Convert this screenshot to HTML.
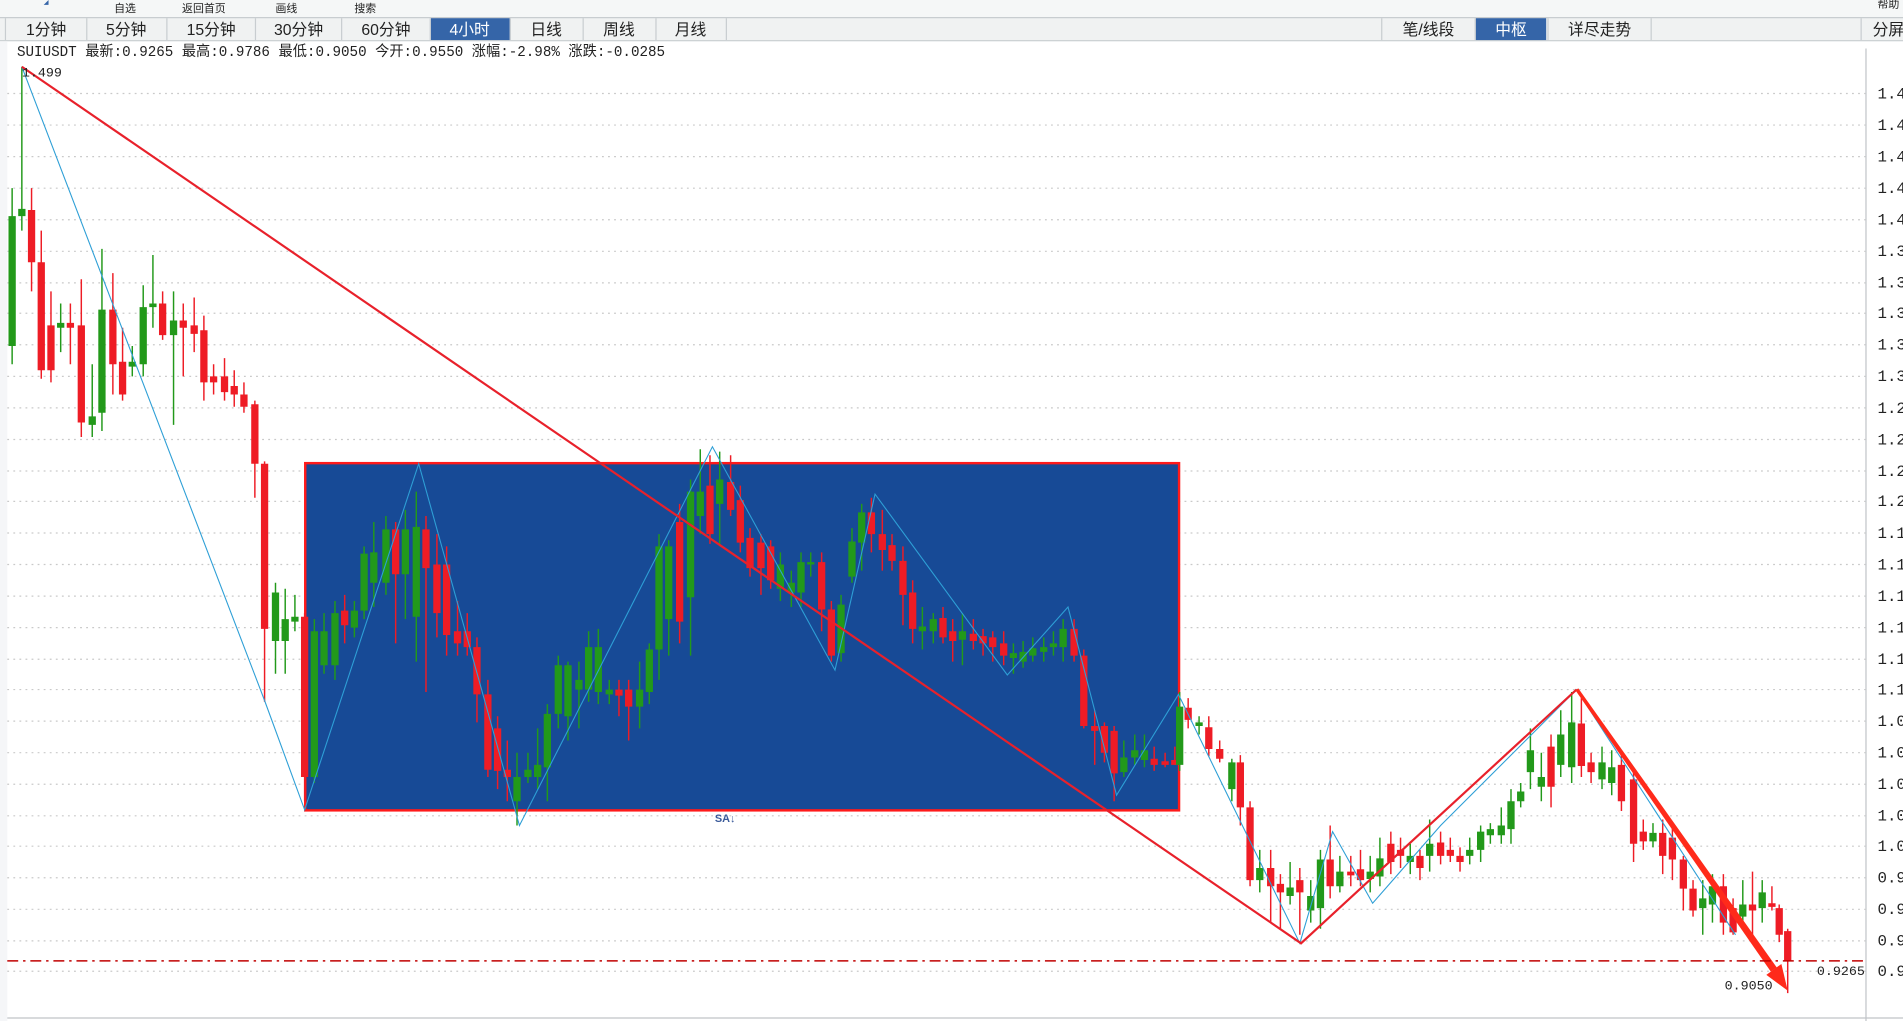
<!DOCTYPE html>
<html><head><meta charset="utf-8"><style>
html,body{margin:0;padding:0;background:#fff;overflow:hidden}
svg{display:block}
text{font-family:"Liberation Sans","Noto Sans CJK SC",sans-serif}
.m{font-family:"Liberation Mono","Noto Sans CJK SC",monospace}
</style></head><body>
<svg width="1903" height="1021" viewBox="0 0 1568 841" preserveAspectRatio="none" xmlns="http://www.w3.org/2000/svg">
<rect width="1568" height="841" fill="#fff"/>
<rect x="0" y="0" width="1568" height="14" fill="#f5f7f7"/>
<path d="M40 0l-4 4 4 0z" fill="#3565a8"/>
<g font-size="9" fill="#222">
<text x="94" y="10">自选</text><text x="150" y="10">返回首页</text><text x="227" y="10">画线</text><text x="292" y="10">搜索</text><text x="1547" y="6">帮助</text>
</g>
<rect x="0" y="14" width="1568" height="20" fill="#f0f2f2"/>
<line x1="0" y1="14.5" x2="1568" y2="14.5" stroke="#c8cdd0"/>
<line x1="0" y1="33.5" x2="1568" y2="33.5" stroke="#c8cdd0"/>
<rect x="355" y="15" width="65" height="18" fill="#3565a8"/>
<rect x="1216" y="15" width="58" height="18" fill="#3565a8"/>
<g stroke="#c8cdd0">
<line x1="4.5" y1="15" x2="4.5" y2="33"/><line x1="71.5" y1="15" x2="71.5" y2="33"/><line x1="137.5" y1="15" x2="137.5" y2="33"/><line x1="210.5" y1="15" x2="210.5" y2="33"/><line x1="281.5" y1="15" x2="281.5" y2="33"/><line x1="354.5" y1="15" x2="354.5" y2="33"/><line x1="420.5" y1="15" x2="420.5" y2="33"/><line x1="480.5" y1="15" x2="480.5" y2="33"/><line x1="540.5" y1="15" x2="540.5" y2="33"/><line x1="598.5" y1="15" x2="598.5" y2="33"/>
<line x1="1138.5" y1="15" x2="1138.5" y2="33"/><line x1="1215.5" y1="15" x2="1215.5" y2="33"/><line x1="1275.5" y1="15" x2="1275.5" y2="33"/><line x1="1360.5" y1="15" x2="1360.5" y2="33"/><line x1="1533.5" y1="15" x2="1533.5" y2="33"/>
</g>
<g font-size="13" fill="#222" text-anchor="middle">
<text x="38" y="29">1分钟</text><text x="104" y="29">5分钟</text><text x="174" y="29">15分钟</text><text x="246" y="29">30分钟</text><text x="318" y="29">60分钟</text><text x="387" y="29" fill="#fff">4小时</text><text x="450" y="29">日线</text><text x="510" y="29">周线</text><text x="569" y="29">月线</text>
<text x="1177" y="29">笔/线段</text><text x="1245" y="29" fill="#fff">中枢</text><text x="1318" y="29">详尽走势</text><text x="1556" y="29">分屏</text>
</g>
<text class="m" x="14" y="46" font-size="12" fill="#222" textLength="534" lengthAdjust="spacingAndGlyphs">SUIUSDT  最新:0.9265 最高:0.9786 最低:0.9050 今开:0.9550 涨幅:-2.98% 涨跌:-0.0285</text>
<rect x="0" y="34" width="6" height="807" fill="#f5f6f8"/>
<g stroke="#c9c9c9" stroke-dasharray="1.5 3.5">
<path d="M6 77H1537M6 103H1537M6 129H1537M6 155H1537M6 181H1537M6 207H1537M6 233H1537M6 258H1537M6 284H1537M6 310H1537M6 336H1537M6 362H1537M6 388H1537M6 413H1537M6 439H1537M6 465H1537M6 491H1537M6 517H1537M6 543H1537M6 568H1537M6 594H1537M6 620H1537M6 646H1537M6 672H1537M6 697H1537M6 723H1537M6 749H1537M6 775H1537M6 800H1537"/>
</g>
<line x1="1537.5" y1="40" x2="1537.5" y2="841" stroke="#c0c4c8"/>
<line x1="6" y1="838.5" x2="1568" y2="838.5" stroke="#c0c4c8"/>
<g font-size="13" fill="#222">
<text class="m" x="1547" y="81">1.4</text><text class="m" x="1547" y="107">1.4</text><text class="m" x="1547" y="133">1.4</text><text class="m" x="1547" y="159">1.4</text><text class="m" x="1547" y="185">1.4</text>
<text class="m" x="1547" y="211">1.3</text><text class="m" x="1547" y="237">1.3</text><text class="m" x="1547" y="262">1.3</text><text class="m" x="1547" y="288">1.3</text><text class="m" x="1547" y="314">1.3</text>
<text class="m" x="1547" y="340">1.2</text><text class="m" x="1547" y="366">1.2</text><text class="m" x="1547" y="392">1.2</text><text class="m" x="1547" y="417">1.2</text><text class="m" x="1547" y="443">1.1</text>
<text class="m" x="1547" y="469">1.1</text><text class="m" x="1547" y="495">1.1</text><text class="m" x="1547" y="521">1.1</text><text class="m" x="1547" y="547">1.1</text><text class="m" x="1547" y="572">1.1</text>
<text class="m" x="1547" y="598">1.0</text><text class="m" x="1547" y="624">1.0</text><text class="m" x="1547" y="650">1.0</text><text class="m" x="1547" y="676">1.0</text><text class="m" x="1547" y="701">1.0</text>
<text class="m" x="1547" y="727">0.9</text><text class="m" x="1547" y="753">0.9</text><text class="m" x="1547" y="779">0.9</text><text class="m" x="1547" y="804">0.9</text>
</g>
<rect x="251.5" y="381.5" width="720" height="286" fill="#174a96" stroke="#ff1a1a" stroke-width="2"/>
<text x="589" y="677" font-size="9" font-weight="bold" fill="#3a5a9a">SA↓</text>
<path fill="none" stroke="#ee1c25" stroke-width="1.2" d="M26 155V240M34 190V312M42 240V315M58 250V300M67 230V360M93 225V325M101 270V330M134 240V280M151 250V310M160 245V290M168 260V330M176 300V325M185 295V330M193 305V335M201 315V340M210 330V410M218 380V578M251 505V660M284 490V530M326 430V530M351 425V570M360 440V525M368 450V540M377 495V540M385 505V540M393 525V595M402 560V640M410 590V650M418 610V660M510 560V590M518 560V610M560 415V530M585 375V448M602 375V425M610 400V455M618 435V475M627 440V490M635 445V485M677 455V520M685 495V545M718 410V455M727 420V470M735 440V470M744 450V515M752 478V530M777 500V530M785 510V545M802 510V535M810 518V540M818 520V545M827 520V548M885 510V545M893 535V600M902 585V630M910 595V628M918 598V660M951 615V635M960 620V632M968 615V630M979 575V600M996 590V623M1005 610V628M1022 622V680M1030 660V730M1047 700V760M1055 720V765M1071 715V770M1096 680V740M1113 705V730M1121 700V730M1146 685V720M1154 690V715M1170 700V725M1187 685V712M1195 690V710M1203 698V718M1278 605V665M1303 575V640M1311 620V645M1336 622V668M1346 635V710M1354 675V700M1370 675V720M1378 680V725M1387 705V750M1395 725V755M1420 720V770M1428 740V770M1444 718V770M1460 730V750M1466 745V776M1473 765V818"/>
<path fill="#ee1c25" d="M23 173h6V216h-6zM31 216h6V305h-6zM39 268h6V305h-6zM55 266h6V270h-6zM64 268h6V348h-6zM90 255h6V300h-6zM98 298h6V325h-6zM131 250h6V276h-6zM148 264h6V270h-6zM157 268h6V275h-6zM165 272h6V315h-6zM173 310h6V315h-6zM182 310h6V323h-6zM190 318h6V325h-6zM198 325h6V335h-6zM207 333h6V382h-6zM215 382h6V518h-6zM248 508h6V640h-6zM281 503h6V515h-6zM323 436h6V473h-6zM348 436h6V468h-6zM357 465h6V505h-6zM365 465h6V523h-6zM374 520h6V530h-6zM382 520h6V533h-6zM390 533h6V572h-6zM399 572h6V634h-6zM407 600h6V635h-6zM415 634h6V640h-6zM507 568h6V573h-6zM515 568h6V582h-6zM557 430h6V512h-6zM582 400h6V440h-6zM599 397h6V420h-6zM607 412h6V447h-6zM615 443h6V468h-6zM624 447h6V468h-6zM632 450h6V478h-6zM674 463h6V502h-6zM682 502h6V540h-6zM715 422h6V440h-6zM724 440h6V453h-6zM732 449h6V462h-6zM741 462h6V490h-6zM749 488h6V518h-6zM774 509h6V525h-6zM782 520h6V528h-6zM799 522h6V528h-6zM807 524h6V530h-6zM815 525h6V533h-6zM824 530h6V540h-6zM882 518h6V540h-6zM890 540h6V598h-6zM899 598h6V602h-6zM907 598h6V620h-6zM915 602h6V637h-6zM948 625h6V630h-6zM957 627h6V630h-6zM965 626h6V630h-6zM976 583h6V593h-6zM993 599h6V617h-6zM1002 617h6V625h-6zM1019 628h6V665h-6zM1027 665h6V725h-6zM1044 715h6V730h-6zM1052 728h6V735h-6zM1068 725h6V735h-6zM1093 708h6V730h-6zM1110 718h6V721h-6zM1118 716h6V725h-6zM1143 695h6V710h-6zM1151 700h6V705h-6zM1167 705h6V715h-6zM1184 694h6V705h-6zM1192 700h6V705h-6zM1200 705h6V710h-6zM1275 615h6V648h-6zM1300 596h6V631h-6zM1308 628h6V636h-6zM1333 630h6V660h-6zM1343 642h6V695h-6zM1351 685h6V693h-6zM1367 686h6V705h-6zM1375 690h6V708h-6zM1384 708h6V732h-6zM1392 732h6V750h-6zM1417 730h6V760h-6zM1425 748h6V768h-6zM1441 745h6V750h-6zM1457 744h6V747h-6zM1463 748h6V770h-6zM1470 767h6V792h-6z"/>
<path fill="none" stroke="#22991a" stroke-width="1.2" d="M10 155V300M18 55V190M50 250V290M76 300V360M84 205V355M109 285V310M118 235V310M126 210V270M143 240V350M227 480V555M235 485V555M243 490V520M259 510V645M267 505V555M276 495V560M292 495V525M300 450V510M308 430V500M318 425V490M334 420V510M343 405V545M426 620V680M435 620V645M443 600V650M451 580V660M460 540V600M468 545V610M477 545V600M485 520V578M493 518V580M502 560V580M527 545V600M535 530V580M543 440V560M551 445V540M569 395V540M577 370V440M593 372V450M643 455V495M652 470V500M660 455V500M668 455V475M693 490V545M702 435V480M710 415V470M760 500V535M769 505V530M793 505V548M835 530V555M843 528V550M851 525V545M860 525V545M868 520V540M876 510V545M926 610V640M935 605V630M943 605V632M972 570V635M988 590V605M1015 625V660M1038 700V735M1063 710V745M1080 725V760M1088 700V765M1104 705V735M1129 705V735M1137 690V730M1162 695V720M1178 675V718M1211 690V712M1220 680V710M1228 678V695M1237 665V695M1245 650V695M1253 645V665M1261 600V650M1270 620V660M1286 585V640M1295 570V645M1320 615V650M1328 618V655M1362 678V698M1403 725V770M1411 720V760M1436 725V765M1452 725V760"/>
<path fill="#22991a" d="M7 178h6V285h-6zM15 172h6V178h-6zM47 266h6V270h-6zM73 343h6V350h-6zM81 255h6V340h-6zM106 298h6V302h-6zM115 253h6V300h-6zM123 250h6V253h-6zM140 264h6V276h-6zM224 488h6V528h-6zM232 510h6V528h-6zM240 508h6V512h-6zM256 520h6V640h-6zM264 520h6V548h-6zM273 505h6V548h-6zM289 503h6V517h-6zM297 456h6V503h-6zM305 455h6V480h-6zM315 436h6V480h-6zM331 436h6V473h-6zM340 434h6V508h-6zM423 640h6V660h-6zM432 634h6V640h-6zM440 630h6V640h-6zM448 588h6V632h-6zM457 548h6V588h-6zM465 548h6V590h-6zM474 560h6V568h-6zM482 533h6V568h-6zM490 533h6V570h-6zM499 568h6V572h-6zM524 568h6V582h-6zM532 535h6V570h-6zM540 450h6V535h-6zM548 450h6V510h-6zM566 405h6V492h-6zM574 405h6V425h-6zM590 395h6V415h-6zM640 465h6V485h-6zM649 480h6V488h-6zM657 463h6V488h-6zM665 463h6V465h-6zM690 498h6V538h-6zM699 446h6V475h-6zM707 422h6V447h-6zM757 516h6V520h-6zM766 510h6V520h-6zM790 520h6V527h-6zM832 538h6V542h-6zM840 537h6V545h-6zM848 534h6V540h-6zM857 533h6V537h-6zM865 530h6V533h-6zM873 518h6V533h-6zM923 624h6V636h-6zM932 618h6V624h-6zM940 618h6V626h-6zM969 582h6V630h-6zM985 595h6V598h-6zM1012 628h6V650h-6zM1035 715h6V725h-6zM1060 731h6V738h-6zM1077 738h6V750h-6zM1085 708h6V748h-6zM1101 718h6V730h-6zM1126 718h6V724h-6zM1134 707h6V722h-6zM1159 705h6V710h-6zM1175 695h6V705h-6zM1208 700h6V705h-6zM1217 685h6V700h-6zM1225 683h6V688h-6zM1234 680h6V688h-6zM1242 660h6V683h-6zM1250 652h6V660h-6zM1258 618h6V636h-6zM1267 640h6V648h-6zM1283 605h6V630h-6zM1292 595h6V632h-6zM1317 628h6V642h-6zM1325 632h6V645h-6zM1359 686h6V693h-6zM1400 740h6V748h-6zM1408 730h6V745h-6zM1433 745h6V755h-6zM1449 735h6V748h-6z"/>
<polyline fill="none" stroke="#2e9fd6" stroke-width="0.9" points="18,55 218,577 251,667 345,382 428,680 587,368 688,552 721,407 830,556 880,500 920,655 971,572 1071,777 1098,685 1131,744 1187,680 1299,568 1430,770"/>
<polyline fill="none" stroke="#e8212b" stroke-width="1.8" points="18,55 1072,777 1299,568"/>
<polygon fill="#ff2a1a" points="1298,568.5 1300.5,567 1464,796.9 1459.1,800.3"/>
<polygon fill="#ff2a1a" points="1467.8,794 1455.4,803 1473,816"/>
<line x1="6" y1="791.5" x2="1537" y2="791.5" stroke="#c00000" stroke-dasharray="9 4 2 4" stroke-width="1.2"/>
<g font-size="11" fill="#222">
<text class="m" x="1497" y="803">0.9265</text>
<text class="m" x="1421" y="815">0.9050</text>
<text class="m" x="18" y="63">1.499</text>
</g>
</svg>
</body></html>
